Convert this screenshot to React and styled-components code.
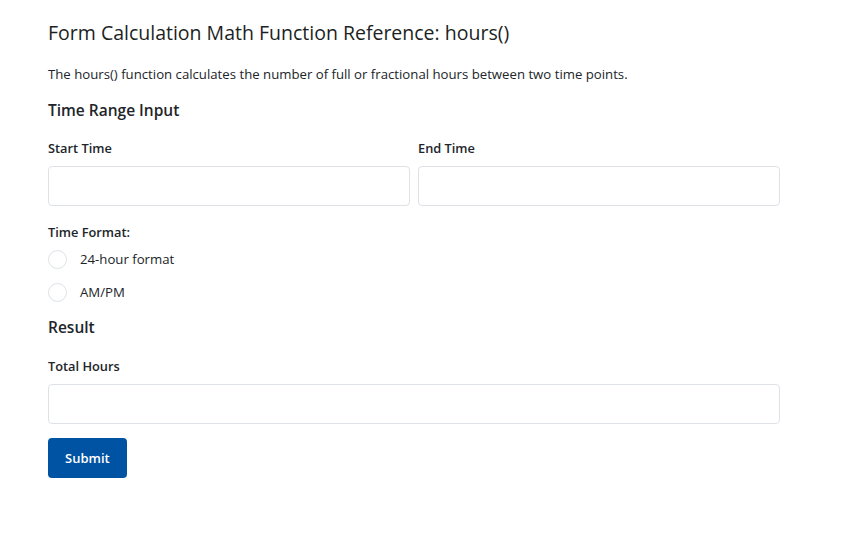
import React from 'react'
import styled, { createGlobalStyle } from 'styled-components'

const Global = createGlobalStyle`
  body {
    margin: 0;
    background: #fff;
    font-family: "Open Sans", "Noto Sans", sans-serif;
    color: #212529;
  }
`

const Page = styled.div`
  width: 732px;
  padding: 19px 48px;
`

const Title = styled.h1`
  font-size: 19.5px;
  font-weight: 500;
  margin: 0 0 17px;
  line-height: 28px;
  color: #1c1f23;
`

const Intro = styled.p`
  font-size: 13.2px;
  margin: 0 0 15px;
  line-height: 20px;
`

const Section = styled.h2`
  font-size: 15.5px;
  font-weight: 600;
  margin: 0 0 ${p => p.$mb || 18}px;
  line-height: 22px;
`

const Row = styled.div`
  display: grid;
  grid-template-columns: 1fr 1fr;
  gap: 8px;
`

const Field = styled.div`
  display: flex;
  flex-direction: column;
  margin-bottom: ${p => p.$mb || 17}px;
`

const Label = styled.label`
  font-size: 12.8px;
  font-weight: 600;
  line-height: 18px;
  margin-bottom: 9px;
`

const Input = styled.input`
  box-sizing: border-box;
  height: 40px;
  width: 100%;
  border: 1px solid #dee2e6;
  border-radius: 4px;
  padding: 6px 12px;
  font: inherit;
`

const Radio = styled.label`
  display: flex;
  align-items: center;
  gap: 13px;
  font-size: 13.2px;
  line-height: 18px;
  height: 18px;
  margin-bottom: 15px;
`

const Circle = styled.span`
  box-sizing: border-box;
  width: 19px;
  height: 19px;
  border: 1px solid #dee2e6;
  border-radius: 50%;
  background: #fff;
`

const Button = styled.button`
  height: 40px;
  padding: 0 17px;
  border: none;
  border-radius: 4px;
  background: #0052a3;
  color: #fff;
  font: inherit;
  font-size: 13px;
  font-weight: 600;
  cursor: pointer;
`

export default function App() {
  return (
    <Page>
      <Global />
      <Title>Form Calculation Math Function Reference: hours()</Title>
      <Intro>The hours() function calculates the number of full or fractional hours between two time points.</Intro>
      <Section>Time Range Input</Section>
      <Row>
        <Field>
          <Label>Start Time</Label>
          <Input />
        </Field>
        <Field>
          <Label>End Time</Label>
          <Input />
        </Field>
      </Row>
      <Label as="div">Time Format:</Label>
      <Radio><Circle />24-hour format</Radio>
      <Radio><Circle />AM/PM</Radio>
      <Section $mb={19}>Result</Section>
      <Field $mb={14}>
        <Label>Total Hours</Label>
        <Input />
      </Field>
      <Button>Submit</Button>
    </Page>
  )
}
